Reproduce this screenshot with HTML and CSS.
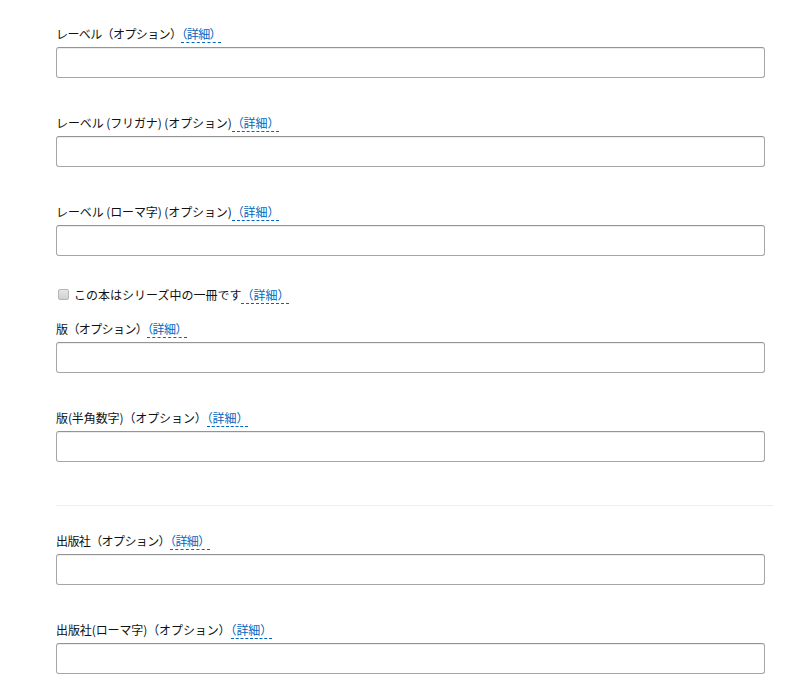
FILE: index.html
```html
<!DOCTYPE html>
<html lang="ja">
<head>
<meta charset="utf-8">
<title>本の詳細</title>
<link rel="stylesheet" href="styles.css">
</head>
<body>
<div class="form">
  <div class="field">
    <label class="label">レーベル（オプション）<a class="more">（詳細）</a></label>
    <input class="input" type="text">
  </div>
  <div class="field">
    <label class="label label-wide">レーベル (フリガナ) (オプション)<a class="more">（詳細）</a></label>
    <input class="input" type="text">
  </div>
  <div class="field">
    <label class="label label-wide">レーベル (ローマ字) (オプション)<a class="more">（詳細）</a></label>
    <input class="input" type="text">
  </div>
  <div class="check-row">
    <span class="check"></span>
    <span class="check-text">この本はシリーズ中の一冊です<a class="more">（詳細）</a></span>
  </div>
  <div class="field">
    <label class="label">版（オプション）<a class="more">（詳細）</a></label>
    <input class="input" type="text">
  </div>
  <div class="field">
    <label class="label label-wide">版(半角数字)（オプション）<a class="more">（詳細）</a></label>
    <input class="input" type="text">
  </div>
  <hr class="divider">
  <div class="field">
    <label class="label">出版社（オプション）<a class="more">（詳細）</a></label>
    <input class="input" type="text">
  </div>
  <div class="field">
    <label class="label label-wide">出版社(ローマ字)（オプション）<a class="more">（詳細）</a></label>
    <input class="input" type="text">
  </div>
</div>
</body>
</html>
```

FILE: styles.css
```css
html, body {
  margin: 0;
  padding: 0;
  background: #fff;
}
body {
  font-family: "Noto Sans CJK JP", "Noto Sans", sans-serif;
  font-size: 12px;
  color: #111;
}
.form {
  display: flex;
  flex-direction: column;
  width: 717px;
  padding: 24px 0 0 56px;
}
.field {
  display: flex;
  flex-direction: column;
  gap: 4px;
  margin-bottom: 35px;
}
.label {
  display: block;
  line-height: 19px;
  letter-spacing: -0.6px;
}
.label-wide {
  letter-spacing: -0.1px;
}
.more {
  color: #0066c0;
  border-bottom: 1px dashed #0066c0;
  cursor: pointer;
}
.input {
  box-sizing: border-box;
  width: 709px;
  height: 31px;
  margin: 0;
  border: 1px solid #a6a6a6;
  border-top-color: #949494;
  border-radius: 3px;
  box-shadow: 0 1px 0 rgba(0,0,0,.07) inset;
  background: #fff;
}
.check-row {
  display: flex;
  align-items: center;
  gap: 5px;
  margin: -6px 0 15px 2px;
  line-height: 19px;
}
.check {
  width: 11px;
  height: 11px;
  box-sizing: border-box;
  border: 1px solid #b5b5b5;
  border-radius: 2px;
  background: linear-gradient(#e6e6e6, #cfcfcf);
}
.check-text {
  letter-spacing: 0;
}
.divider {
  border: 0;
  border-top: 1px solid #eee;
  margin: 8px 0 25px;
  width: 717px;
}
```
